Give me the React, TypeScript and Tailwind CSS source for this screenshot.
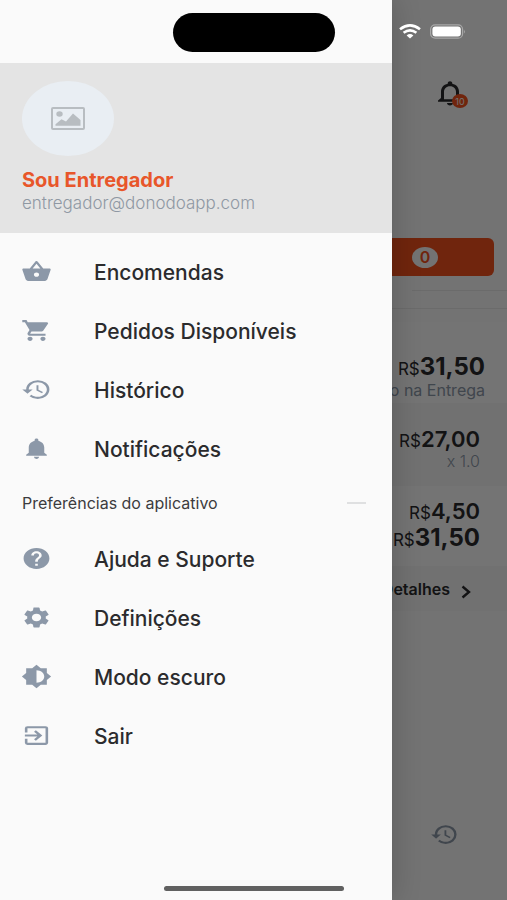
import type { ReactNode } from "react";
import type { IconType } from "react-icons";
import {
  MdBrightnessMedium,
  MdExitToApp,
  MdHelp,
  MdHistory,
  MdNotifications,
  MdNotificationsNone,
  MdSettings,
  MdShoppingBasket,
  MdShoppingCart,
} from "react-icons/md";

type Entry = { label: string; icon: IconType };

const mainEntries: Entry[] = [
  { label: "Encomendas", icon: MdShoppingBasket },
  { label: "Pedidos Disponíveis", icon: MdShoppingCart },
  { label: "Histórico", icon: MdHistory },
  { label: "Notificações", icon: MdNotifications },
];

const preferenceEntries: Entry[] = [
  { label: "Ajuda e Suporte", icon: MdHelp },
  { label: "Definições", icon: MdSettings },
  { label: "Modo escuro", icon: MdBrightnessMedium },
  { label: "Sair", icon: MdExitToApp },
];

function MenuItem({ label, icon: Icon }: Entry) {
  return (
    <li>
      <button type="button" className="flex h-[59px] w-full items-center gap-[42px] px-[21px] text-left">
        <Icon preserveAspectRatio="none" className="mb-[2px] h-[25px] w-[31px] shrink-0 text-[#8c98a8]" />
        <span className="whitespace-nowrap text-[21px] font-medium leading-6 text-[#2b2b2d]">{label}</span>
      </button>
    </li>
  );
}

function Price({ value, large = false }: { value: string; large?: boolean }) {
  return (
    <p className={large ? "text-[24px] font-bold leading-[26px]" : "text-[22px] font-semibold leading-6"}>
      <span className="text-[17px] font-normal">R$</span>
      {value}
    </p>
  );
}

function Block({ children, className }: { children: ReactNode; className: string }) {
  return <div className={`flex flex-col items-end text-right ${className}`}>{children}</div>;
}

function OrdersPage() {
  return (
    <main className="flex min-h-screen flex-col bg-[#fafafa] text-[#2b2b2d]">
      <header className="flex justify-end pr-[39px] pt-[78px]">
        <button type="button" aria-label="Notificações" className="relative">
          <MdNotificationsNone preserveAspectRatio="none" className="h-[30px] w-[36px]" />
          <span className="absolute bottom-0 right-0 flex h-[14px] w-4 items-center justify-center rounded-[50%] bg-[#f4511e] text-[9px] leading-none text-[#fafafa]">
            10
          </span>
        </button>
      </header>

      <button
        type="button"
        className="ml-[13px] mr-[13px] mt-[130px] flex h-[38px] items-center justify-end rounded-md bg-[#f4511e] pr-[56px]"
      >
        <span className="flex h-[21px] w-[26px] items-center justify-center rounded-[50%] bg-[#fafafa] text-[16px] font-semibold leading-none text-[#f4511e]">
          0
        </span>
      </button>

      <hr className="ml-auto mt-[14px] w-[95px] border-[#e9e9e9]" />
      <hr className="mt-[17px] border-[#e9e9e9]" />

      <section className="mt-[13px]">
        <Block className="h-[81px] bg-[#fdfdfd] pr-[22px] pt-8">
          <Price value="31,50" large />
          <p className="whitespace-nowrap text-[16px] leading-4 text-[#8c98a8]">o na Entrega</p>
        </Block>
        <Block className="h-[83px] bg-[#f7f7f7] pr-[27px] pt-6">
          <Price value="27,00" />
          <p className="text-[16px] font-light leading-4 text-[#8c98a8]">x 1.0</p>
        </Block>
        <Block className="h-[80px] bg-[#fdfdfd] pr-[27px] pt-[13px]">
          <Price value="4,50" />
          <Price value="31,50" large />
        </Block>
        <button type="button" className="flex h-[45px] w-full items-center justify-end gap-[11px] bg-[#f7f7f7] pr-[36px]">
          <span className="text-[16px] font-semibold leading-5">Detalhes</span>
          <svg viewBox="0 0 10 14" className="mt-[6px] h-[14px] w-[10px]" fill="none" stroke="currentColor" strokeWidth="2.4">
            <path d="M1.5 1.5 8 7l-6.500 5.500" />
          </svg>
        </button>
      </section>

      <nav className="mt-auto flex justify-end pb-[53px] pr-[48px]">
        <button type="button" aria-label="Histórico">
          <MdHistory preserveAspectRatio="none" className="h-[25px] w-[29px] text-[#8c98a8]" />
        </button>
      </nav>
    </main>
  );
}

function Drawer() {
  return (
    <aside className="absolute inset-y-0 left-0 w-[392px] max-w-[80%] bg-[#fafafa] pt-[63px] shadow-[0_0_28px_rgba(0,0,0,0.2)]">
      <header className="flex h-[170px] flex-col items-start bg-[#e4e4e4] px-[22px] pt-[18px]">
        <div className="flex h-[75px] w-[92px] items-center justify-center rounded-[50%] bg-[#e9eef3]">
          <svg viewBox="0 0 34 23" className="h-[23px] w-[34px] text-[#b8bdc1]" aria-hidden="true">
            <rect x="1" y="1" width="32" height="21" rx="1" fill="none" stroke="currentColor" strokeWidth="2" />
            <ellipse cx="8.500" cy="7" rx="3.200" ry="2.700" fill="currentColor" />
            <path d="M4.500 18.800v-1.600l6-5 4.500 2.200 7-8 7.500 6.500v5.900z" fill="currentColor" />
          </svg>
        </div>
        <h1 className="mt-3 text-[20px] font-bold leading-6 text-[#e8562a]">Sou Entregador</h1>
        <p className="text-[17px] font-light leading-[22px] text-[#8f98a3]">entregador@donodoapp.com</p>
      </header>

      <ul className="pt-[10px]">
        {mainEntries.map((entry) => (
          <MenuItem key={entry.label} {...entry} />
        ))}
      </ul>
      <div className="flex h-[51px] items-center justify-between pb-[3px] pl-[22px] pr-[26px]">
        <h2 className="text-[16px] leading-5 text-[#3c3c3e]">Preferências do aplicativo</h2>
        <span className="h-[2px] w-[19px] bg-[#dfe0e1]" />
      </div>
      <ul>
        {preferenceEntries.map((entry) => (
          <MenuItem key={entry.label} {...entry} />
        ))}
      </ul>
    </aside>
  );
}

function StatusBar() {
  return (
    <div className="absolute inset-x-0 top-0 h-[63px]">
      <div className="absolute left-1/2 top-[13px] h-[39px] w-[162px] -translate-x-1/2 rounded-full bg-black" />
      <div className="absolute right-[41px] top-[24px] flex items-center gap-[9px] text-white">
        <svg viewBox="0 0 22 15" className="h-[15px] w-[22px]" fill="none" stroke="currentColor" strokeWidth="2.600">
          <path d="M1 5.200Q11-2.400 21 5.200M4.600 8.800Q11 3.800 17.400 8.800" />
          <path d="M7.600 11.400Q11 8.600 14.400 11.400L11 14.400z" fill="currentColor" stroke="none" />
        </svg>
        <svg viewBox="0 0 36 15" className="h-[15px] w-[36px]" fill="none">
          <rect x="0.600" y="0.800" width="32" height="13.400" rx="4.500" stroke="#a8a8a8" strokeWidth="1.200" />
          <rect x="2.400" y="2.600" width="28.400" height="9.800" rx="3" fill="white" />
          <path d="M34 5.500q1.600 2 0 4z" fill="#a8a8a8" />
        </svg>
      </div>
    </div>
  );
}

export default function App() {
  return (
    <div className="relative min-h-screen overflow-hidden font-['Inter','Liberation_Sans',sans-serif]">
      <OrdersPage />
      <div className="absolute inset-0 bg-black/54" />
      <Drawer />
      <StatusBar />
      <div className="absolute bottom-[9px] left-1/2 h-[5px] w-[180px] -translate-x-1/2 rounded-full bg-[#606060]" />
    </div>
  );
}
